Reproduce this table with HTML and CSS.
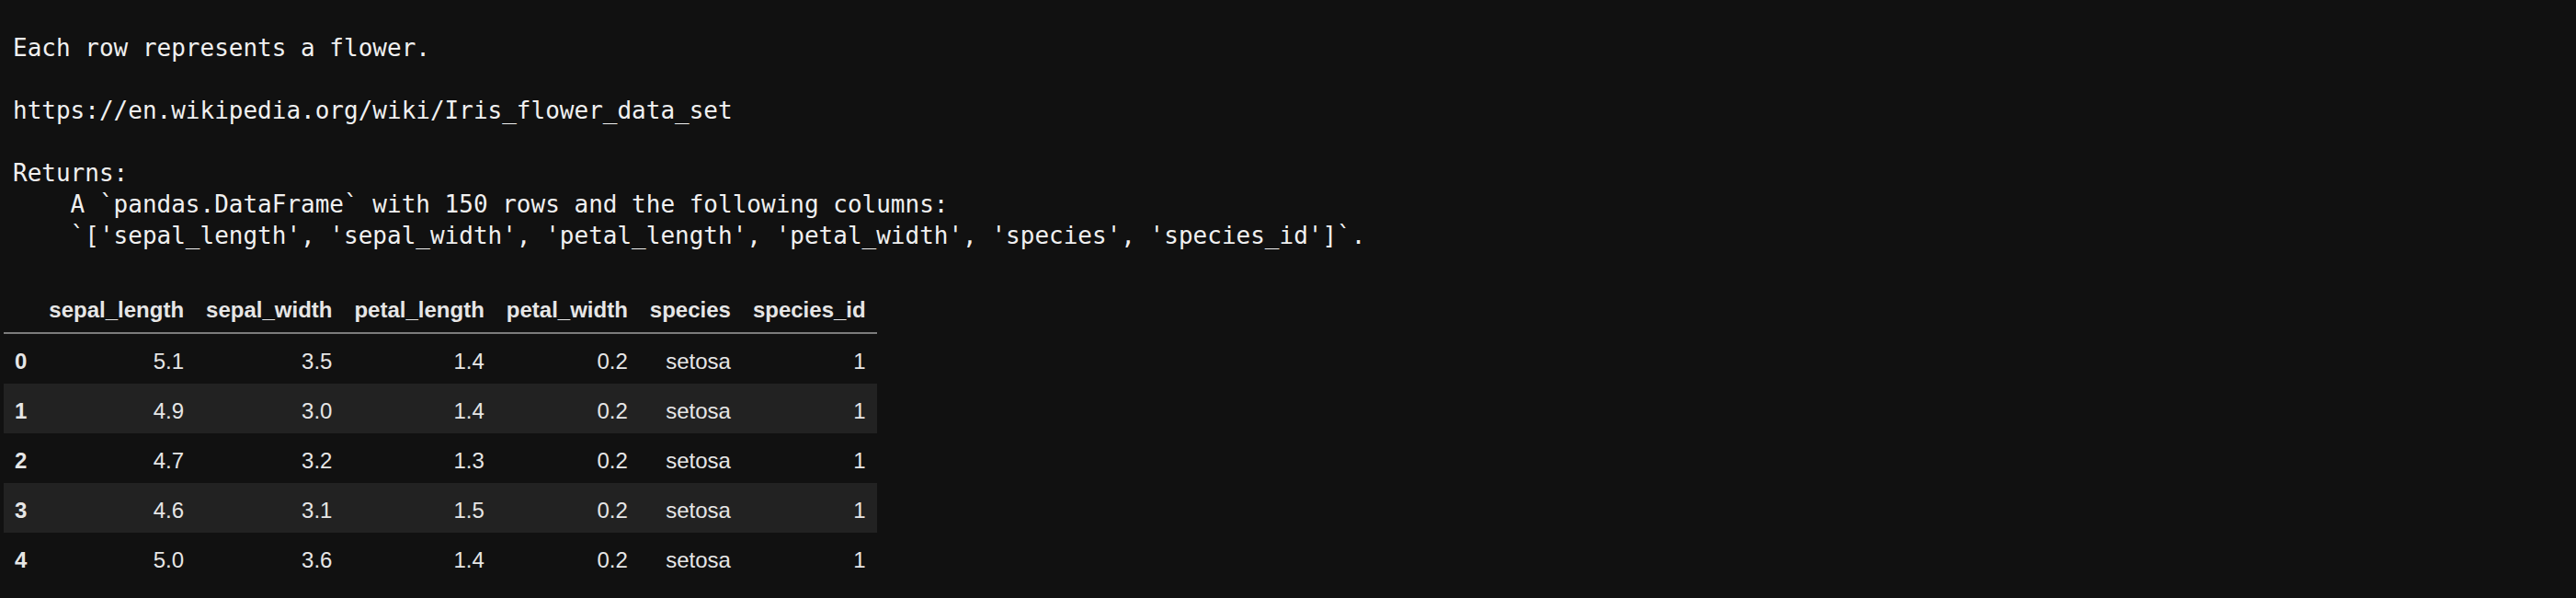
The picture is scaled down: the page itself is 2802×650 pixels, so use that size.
FILE: index.html
```html
<!DOCTYPE html>
<html>
<head>
<meta charset="utf-8">
<link rel="stylesheet" href="styles.css">
</head>
<body>
<div class="output">
<pre class="doc">Each row represents a flower.

https://en.wikipedia.org/wiki/Iris_flower_data_set

Returns:
    A `pandas.DataFrame` with 150 rows and the following columns:
    `['sepal_length', 'sepal_width', 'petal_length', 'petal_width', 'species', 'species_id']`.</pre>
<table class="df">
<thead>
<tr><th></th><th>sepal_length</th><th>sepal_width</th><th>petal_length</th><th>petal_width</th><th>species</th><th>species_id</th></tr>
</thead>
<tbody>
<tr><th>0</th><td>5.1</td><td>3.5</td><td>1.4</td><td>0.2</td><td>setosa</td><td>1</td></tr>
<tr><th>1</th><td>4.9</td><td>3.0</td><td>1.4</td><td>0.2</td><td>setosa</td><td>1</td></tr>
<tr><th>2</th><td>4.7</td><td>3.2</td><td>1.3</td><td>0.2</td><td>setosa</td><td>1</td></tr>
<tr><th>3</th><td>4.6</td><td>3.1</td><td>1.5</td><td>0.2</td><td>setosa</td><td>1</td></tr>
<tr><th>4</th><td>5.0</td><td>3.6</td><td>1.4</td><td>0.2</td><td>setosa</td><td>1</td></tr>
</tbody>
</table>
</div>
</body>
</html>
```

FILE: styles.css
```css
html, body {
  margin: 0;
  background: #111111;
}
.output {
  padding: 35px 0 0 4px;
}
.doc {
  margin: 0 0 34px 0;
  padding-left: 10px;
  font-family: "DejaVu Sans Mono", monospace;
  font-size: 26px;
  line-height: 34px;
  color: #f0f0f0;
}
.df {
  border-collapse: collapse;
  border-spacing: 0;
  font-family: "Liberation Sans", Arial, sans-serif;
  font-size: 24px;
  color: #e6e6e6;
}
.df th,
.df td {
  padding: 15px 12px 9px 12px;
  line-height: 30px;
  text-align: right;
  vertical-align: middle;
  white-space: nowrap;
}
.df th {
  font-weight: bold;
}
.df tbody th {
  text-align: left;
}
.df thead tr {
  border-bottom: 2px solid #7c7c7c;
}
.df tbody tr:nth-child(even) {
  background: #222222;
}
```
